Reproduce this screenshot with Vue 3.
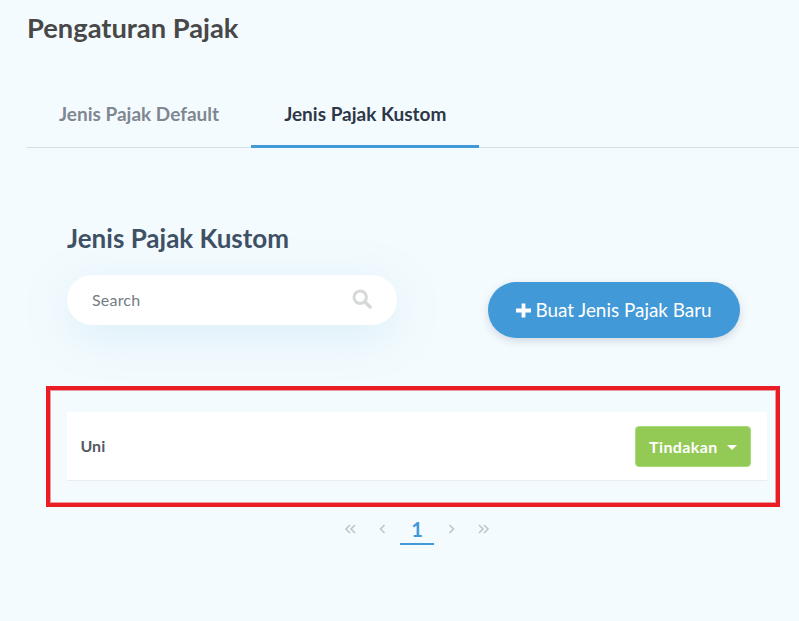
<script setup>
const pages = [
  { id: 'first', d: 'M6 1 L2 5 L6 9 M11 1 L7 5 L11 9' },
  { id: 'prev', d: 'M8.5 1 L4.5 5 L8.5 9' },
  { id: 'current', label: '1' },
  { id: 'next', d: 'M5.5 1 L9.5 5 L5.5 9' },
  { id: 'last', d: 'M3 1 L7 5 L3 9 M8 1 L12 5 L8 9' }
]
</script>

<template>
  <div class="page">
    <h1 class="title">Pengaturan Pajak</h1>
    <nav class="tabs">
      <a class="tab first">Jenis Pajak Default</a>
      <a class="tab active">Jenis Pajak Kustom</a>
    </nav>
    <section class="content">
      <h2 class="subtitle">Jenis Pajak Kustom</h2>
      <div class="toolbar">
        <div class="search">
          <span class="placeholder">Search</span>
          <svg class="search-icon" width="20" height="20" viewBox="0 0 20 20" aria-hidden="true">
            <circle cx="8.2" cy="8.2" r="6.2" fill="none" stroke="#d6d8da" stroke-width="3" />
            <path d="M12.8 12.8 L18 18" stroke="#d6d8da" stroke-width="3.6" stroke-linecap="round" />
          </svg>
        </div>
        <button class="create">
          <svg class="plus" width="15" height="15" viewBox="0 0 15 15" aria-hidden="true">
            <path d="M5.6 0.5h3.8v5.1H15v3.8H9.4V14.5H5.6V9.4H0V5.6h5.6z" fill="#fff" />
          </svg>
          <span class="create-label">Buat Jenis Pajak Baru</span>
        </button>
      </div>
    </section>
    <div class="highlight">
      <div class="row">
        <span class="name">Uni</span>
        <button class="action">Tindakan<i class="caret"></i></button>
      </div>
    </div>
    <div class="pager">
      <template v-for="p in pages" :key="p.id">
        <span v-if="p.label" class="page-item current">{{ p.label }}</span>
        <span v-else class="page-item" :class="{ outer: p.id === 'first' || p.id === 'last' }">
          <svg class="chevron" width="14" height="10" viewBox="0 0 14 10" aria-hidden="true">
            <path :d="p.d" fill="none" stroke="#bcc5cf" stroke-width="1.6" />
          </svg>
        </span>
      </template>
    </div>
  </div>
</template>

<style>
html, body { margin: 0; background: #f4fbfe; }
</style>

<style scoped>
.page {
  width: 799px;
  height: 621px;
  overflow: hidden;
  box-sizing: border-box;
  padding-top: 11px;
  background: #f4fbfe;
  font-family: Lato, "Liberation Sans", sans-serif;
}
.title {
  margin: 0 0 0 27px;
  font-size: 27.3px;
  line-height: 34px;
  font-weight: 700;
  color: #484848;
}
.tabs {
  display: flex;
  margin: 34px 0 0 26px;
  height: 69px;
  box-sizing: border-box;
  border-bottom: 1px solid #d3dfe6;
}
.tab {
  padding: 0 33px;
  height: 69px;
  box-sizing: border-box;
  line-height: 69px;
  font-size: 19px;
  font-weight: 700;
  color: #7f8791;
}
.tab.first { padding-right: 32px; }
.tab.active {
  color: #2c3848;
  border-bottom: 3px solid #4299d7;
}
.content { padding: 72px 0 0 67px; }
.subtitle {
  margin: 0;
  height: 36px;
  font-size: 26px;
  line-height: 36px;
  font-weight: 700;
  color: #3f5165;
}
.toolbar {
  display: flex;
  align-items: flex-start;
  margin-top: 19px;
}
.search {
  display: flex;
  align-items: center;
  justify-content: space-between;
  width: 330px;
  height: 50px;
  box-sizing: border-box;
  padding: 0 25px 0 25px;
  border-radius: 25px;
  background: #fff;
  box-shadow: 0 10px 50px rgba(66, 153, 215, 0.15);
}
.placeholder { font-size: 16px; letter-spacing: 0.2px; color: #747c85; margin-top: -2px; }
.search-icon { margin-top: -2px; }
.create {
  display: flex;
  align-items: center;
  justify-content: center;
  gap: 4px;
  width: 252px;
  height: 56px;
  margin: 7px 0 0 91px;
  padding: 0;
  border: 0;
  border-radius: 28px;
  background: #4299d7;
  box-shadow: 0 3px 8px rgba(60, 80, 110, 0.2);
  color: #fff;
  font-family: inherit;
  font-size: 18.9px;
  font-weight: 400;
}
.create-label { margin-top: -2px; }
.highlight {
  width: 734px;
  height: 121px;
  box-sizing: border-box;
  margin: 48px 0 0 46px;
  padding: 22px 9px 0 17px;
  border: 4px solid #ea1c24;
  box-shadow: inset 0 0 0 1px #eb9a9d;
}
.row {
  display: flex;
  align-items: center;
  justify-content: space-between;
  height: 69px;
  box-sizing: border-box;
  padding: 0 16px 0 13.5px;
  background: #fff;
  border-bottom: 1px solid #e8edf0;
}
.name {
  margin-top: -2px;
  font-size: 16px;
  font-weight: 700;
  color: #555b66;
}
.action {
  display: flex;
  align-items: center;
  width: 116px;
  height: 41px;
  box-sizing: border-box;
  padding: 0 0 0 13px;
  border: 1px solid #a8dc78;
  border-radius: 4px;
  background: #93c955;
  color: #fff;
  font-family: inherit;
  font-size: 16px;
  letter-spacing: 0.4px;
  font-weight: 700;
}
.caret {
  width: 0;
  height: 0;
  margin-left: 9px;
  margin-top: 3px;
  border-left: 5px solid transparent;
  border-right: 5px solid transparent;
  border-top: 5px solid #fff;
}
.pager {
  display: flex;
  align-items: center;
  justify-content: center;
  width: 279px;
  margin: 4px 0 0 277px;
  height: 38px;
}
.page-item {
  display: flex;
  align-items: center;
  justify-content: center;
  width: 34px;
  height: 30px;
  font-size: 20px;
  line-height: 28px;
}
.page-item.outer { width: 30px; }
.chevron { margin-top: -2px; }
.page-item.current {
  box-sizing: border-box;
  height: 30px;
  padding-left: 1px;
  font-weight: 700;
  color: #4299d7;
  border-bottom: 2px solid #4299d7;
}
</style>
